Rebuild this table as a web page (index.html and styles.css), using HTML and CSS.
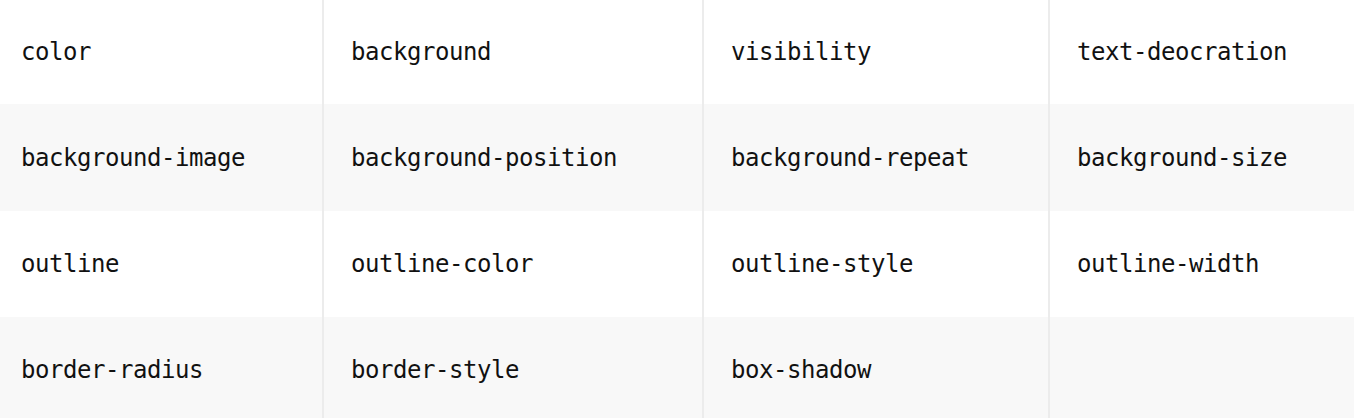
FILE: index.html
```html
<!DOCTYPE html>
<html>
<head>
<meta charset="utf-8">
<link rel="stylesheet" href="styles.css">
</head>
<body>
<div class="props">
  <div class="row">
    <div class="cell">color</div>
    <div class="cell">background</div>
    <div class="cell">visibility</div>
    <div class="cell">text-deocration</div>
  </div>
  <div class="row row-alt row-tall">
    <div class="cell">background-image</div>
    <div class="cell">background-position</div>
    <div class="cell">background-repeat</div>
    <div class="cell">background-size</div>
  </div>
  <div class="row row-mid">
    <div class="cell">outline</div>
    <div class="cell">outline-color</div>
    <div class="cell">outline-style</div>
    <div class="cell">outline-width</div>
  </div>
  <div class="row row-alt row-mid">
    <div class="cell">border-radius</div>
    <div class="cell">border-style</div>
    <div class="cell">box-shadow</div>
    <div class="cell"></div>
  </div>
</div>
</body>
</html>
```

FILE: styles.css
```css
html, body {
  margin: 0;
  padding: 0;
  background: #ffffff;
}

body {
  font-family: "DejaVu Sans Mono", "Liberation Mono", monospace;
  font-size: 24px;
  letter-spacing: -0.45px;
  color: #111111;
  overflow: hidden;
}

.props {
  display: flex;
  flex-direction: column;
}

.row {
  display: grid;
  grid-template-columns: 322px 380px 346px 1fr;
  height: 104px;
  background: #ffffff;
}

.row-tall {
  height: 107px;
}

.row-mid {
  height: 106px;
}

.row-alt {
  background: #f8f8f8;
}

.cell {
  display: flex;
  align-items: center;
  line-height: 28px;
  padding-left: 27px;
  white-space: nowrap;
  border-left: 2px solid #ececec;
}

.cell:first-child {
  border-left: none;
  padding-left: 21px;
}
```
